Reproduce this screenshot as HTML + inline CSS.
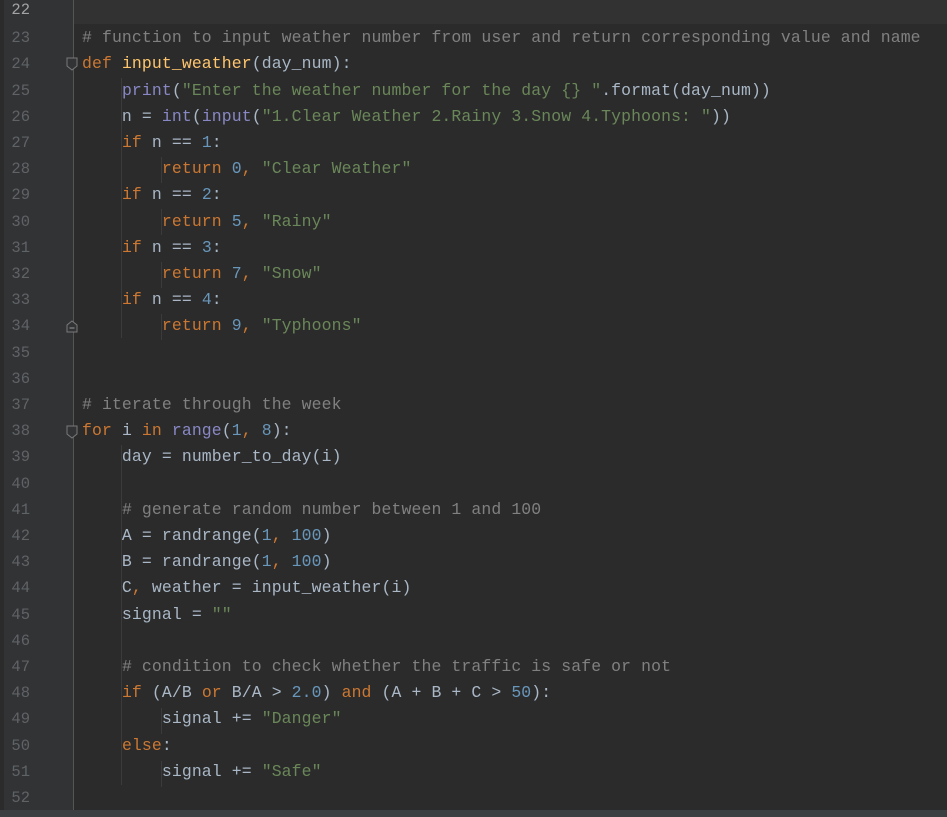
<!DOCTYPE html>
<html><head><style>
html,body{margin:0;padding:0;width:947px;height:817px;overflow:hidden;background:#2b2b2b}
#g{position:absolute;left:0;top:0;width:73px;height:817px;background:#313335}
#g2{position:absolute;left:0;top:0;width:4px;height:817px;background:#2b2b2b}
#sep{position:absolute;left:73px;top:0;width:1px;height:810px;background:#555}
#cur{position:absolute;left:74px;top:0;width:873px;height:24px;background:#323232}
#bot{position:absolute;left:0;top:810px;width:947px;height:7px;background:#3c3f41}
.ln{position:absolute;left:0;width:30px;text-align:right;font:15.5px "Liberation Mono",monospace;color:#606366;height:26.2px;line-height:26.2px}
.c{position:absolute;left:82px;font:16.45px "Liberation Mono",monospace;letter-spacing:0.12px;color:#a9b7c6;white-space:pre;height:26.2px;line-height:26.2px}
.k{color:#cc7832}.f{color:#ffc66d}.s{color:#6a8759}.n{color:#6897bb}.m{color:#808080}.b{color:#8888c6}
.ig{position:absolute;width:1px;background:#3b3b3b}
</style></head><body>
<div id="g"></div><div id="g2"></div><div id="sep"></div><div id="cur"></div>
<div class="ig" style="left:121px;top:78px;height:260px"></div>
<div class="ig" style="left:161px;top:157px;height:26px"></div>
<div class="ig" style="left:161px;top:209px;height:26px"></div>
<div class="ig" style="left:161px;top:262px;height:26px"></div>
<div class="ig" style="left:161px;top:314px;height:26px"></div>
<div class="ig" style="left:121px;top:445px;height:340px"></div>
<div class="ig" style="left:161px;top:708px;height:26px"></div>
<div class="ig" style="left:161px;top:761px;height:26px"></div>
<div id="code"></div>
<script>
var L=[
"",
'<span class="m"># function to input weather number from user and return corresponding value and name</span>',
'<span class="k">def </span><span class="f">input_weather</span>(day_num):',
'    <span class="b">print</span>(<span class="s">"Enter the weather number for the day {} "</span>.format(day_num))',
'    n = <span class="b">int</span>(<span class="b">input</span>(<span class="s">"1.Clear Weather 2.Rainy 3.Snow 4.Typhoons: "</span>))',
'    <span class="k">if </span>n == <span class="n">1</span>:',
'        <span class="k">return </span><span class="n">0</span><span class="k">, </span><span class="s">"Clear Weather"</span>',
'    <span class="k">if </span>n == <span class="n">2</span>:',
'        <span class="k">return </span><span class="n">5</span><span class="k">, </span><span class="s">"Rainy"</span>',
'    <span class="k">if </span>n == <span class="n">3</span>:',
'        <span class="k">return </span><span class="n">7</span><span class="k">, </span><span class="s">"Snow"</span>',
'    <span class="k">if </span>n == <span class="n">4</span>:',
'        <span class="k">return </span><span class="n">9</span><span class="k">, </span><span class="s">"Typhoons"</span>',
'','',
'<span class="m"># iterate through the week</span>',
'<span class="k">for </span>i <span class="k">in </span><span class="b">range</span>(<span class="n">1</span><span class="k">, </span><span class="n">8</span>):',
'    day = number_to_day(i)',
'',
'    <span class="m"># generate random number between 1 and 100</span>',
'    A = randrange(<span class="n">1</span><span class="k">, </span><span class="n">100</span>)',
'    B = randrange(<span class="n">1</span><span class="k">, </span><span class="n">100</span>)',
'    C<span class="k">, </span>weather = input_weather(i)',
'    signal = <span class="s">""</span>',
'',
'    <span class="m"># condition to check whether the traffic is safe or not</span>',
'    <span class="k">if </span>(A/B <span class="k">or </span>B/A &gt; <span class="n">2.0</span>) <span class="k">and </span>(A + B + C &gt; <span class="n">50</span>):',
'        signal += <span class="s">"Danger"</span>',
'    <span class="k">else</span>:',
'        signal += <span class="s">"Safe"</span>',
''];
var h='';
for(var i=0;i<L.length;i++){var t=(-1+i*26.2).toFixed(1);
h+='<div class="ln" style="top:'+(i==0?-3:t)+'px'+(i==0?';color:#a4a3a3':'')+'">'+(22+i)+'</div>';
h+='<div class="c" style="top:'+t+'px">'+L[i]+'</div>';}
document.getElementById('code').innerHTML=h;
</script>
<svg style="position:absolute;left:0;top:0" width="80" height="817">
<path d="M67 58h10v8l-5 4l-5-4z" fill="#313335" stroke="#7a7a7a"/>
<path d="M67 332v-7l5-4l5 4v7z" fill="#313335" stroke="#7a7a7a"/><path d="M69.5 328h5" stroke="#999"/>
<path d="M67 426h10v8l-5 4l-5-4z" fill="#313335" stroke="#7a7a7a"/>
</svg>
<div id="bot"></div>
</body></html>
